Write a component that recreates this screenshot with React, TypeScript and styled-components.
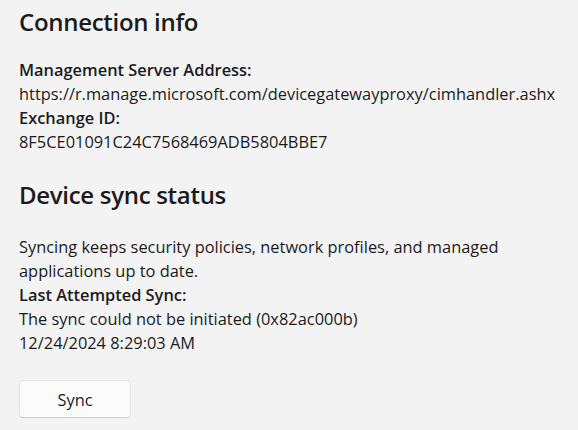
import React from "react";
import styled, { createGlobalStyle } from "styled-components";

const GlobalStyle = createGlobalStyle`
  html, body {
    margin: 0;
    padding: 0;
    background: #f3f3f3;
  }
  body {
    font-family: "Open Sans", "Noto Sans", sans-serif;
    color: #1b1b1b;
  }
`;

const Page = styled("div")`
  padding: 4px 19px 0;
  width: 578px;
  height: 430px;
  box-sizing: border-box;
  overflow: hidden;
`;

const Section = styled("section")<{ gap: number }>`
  display: flex;
  flex-direction: column;
  margin-bottom: ${(p) => p.gap}px;
`;

const Title = styled("h2")<{ below: number }>`
  margin: 0 0 ${(p) => p.below}px;
  font-size: 24px;
  line-height: 36px;
  font-weight: 600;
  letter-spacing: -0.3px;
  white-space: nowrap;
`;

const Line = styled("div")<{ bold?: boolean }>`
  font-size: 16.4px;
  line-height: 24px;
  font-weight: ${(p) => (p.bold ? 600 : 400)};
  white-space: nowrap;
`;

const Paragraph = styled("p")`
  margin: 0;
  font-size: 16.4px;
  line-height: 24px;
  width: 500px;
`;

const SyncButton = styled("button")`
  width: 112px;
  height: 38px;
  padding: 0;
  background: #fbfbfb;
  border: 1px solid #e5e5e5;
  border-bottom-color: #d0d0d0;
  border-radius: 4px;
  font-family: inherit;
  font-size: 16.4px;
  color: #1b1b1b;
  cursor: pointer;
`;

export default function App() {
  return (
    <>
      <GlobalStyle />
      <Page>
        <Section gap={23}>
          <Title below={18}>Connection info</Title>
          <Line bold>Management Server Address:</Line>
          <Line>https://r.manage.microsoft.com/devicegatewayproxy/cimhandler.ashx</Line>
          <Line bold>Exchange ID:</Line>
          <Line>8F5CE01091C24C7568469ADB5804BBE7</Line>
        </Section>
        <Section gap={25}>
          <Title below={22}>Device sync status</Title>
          <Paragraph>
            Syncing keeps security policies, network profiles, and managed
            applications up to date.
          </Paragraph>
          <Line bold>Last Attempted Sync:</Line>
          <Line>The sync could not be initiated (0x82ac000b)</Line>
          <Line>12/24/2024 8:29:03 AM</Line>
        </Section>
        <SyncButton>Sync</SyncButton>
      </Page>
    </>
  );
}
